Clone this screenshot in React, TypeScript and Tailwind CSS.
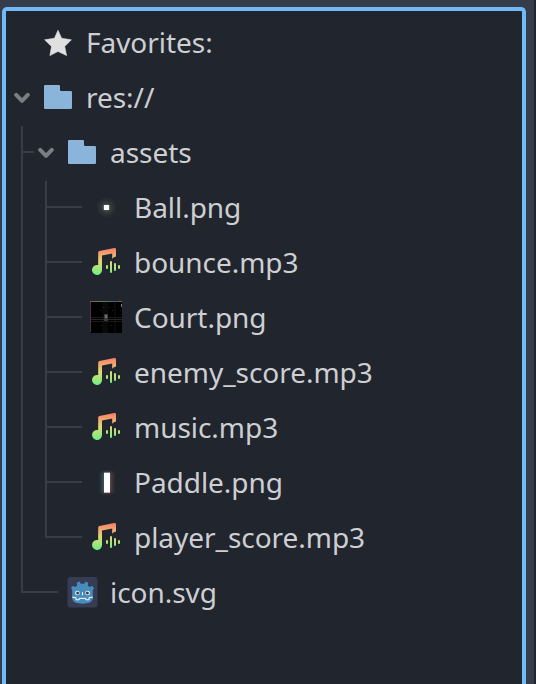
import React from "react";

type Kind = "star" | "folder" | "audio" | "ball" | "court" | "paddle" | "godot";
type Item = { name: string; level: number; kind: Kind; open?: boolean; last?: boolean };

const items: Item[] = [
  { name: "Favorites:", level: 0, kind: "star" },
  { name: "res://", level: 0, kind: "folder", open: true },
  { name: "assets", level: 1, kind: "folder", open: true },
  { name: "Ball.png", level: 2, kind: "ball" },
  { name: "bounce.mp3", level: 2, kind: "audio" },
  { name: "Court.png", level: 2, kind: "court" },
  { name: "enemy_score.mp3", level: 2, kind: "audio" },
  { name: "music.mp3", level: 2, kind: "audio" },
  { name: "Paddle.png", level: 2, kind: "paddle" },
  { name: "player_score.mp3", level: 2, kind: "audio", last: true },
  { name: "icon.svg", level: 1, kind: "godot", last: true },
];

function Icon({ kind }: { kind: Kind }) {
  return (
    <svg viewBox="0 0 32 32" className="h-8 w-8">
      {kind === "star" && (
        <path
          fill="#e0e0e0"
          stroke="#e0e0e0"
          strokeWidth="0.6"
          strokeLinejoin="round"
          d="M16 4.2 19.6 12.3 29.4 13.8 22.7 20.5 24.6 29.6 16 25.4 7.9 29.6 9.5 20.5 2.6 13.8 12.4 12.3Z"
        />
      )}
      {kind === "folder" && (
        <path
          fill="#8ab4da"
          d="M3.2 4h13.6Q18 4 18 5.2V8.8Q18 10 19.2 10h9.6Q30 10 30 11.2v15.6Q30 28 28.8 28H3.2Q2 28 2 26.8V5.2Q2 4 3.2 4Z"
        />
      )}
      {kind === "audio" && (
        <>
          <defs>
            <linearGradient id="tone" x1="0" y1="2" x2="0" y2="29" gradientUnits="userSpaceOnUse">
              <stop offset="0" stopColor="#ff7a6e" />
              <stop offset="0.5" stopColor="#e1da70" />
              <stop offset="1" stopColor="#6df085" />
            </linearGradient>
          </defs>
          <g fill="url(#tone)">
            <path d="M24.3 2.1Q26 1.8 26 3.4V10.6Q23.6 10.8 22.2 12.8V7.4L12 9.4V24a5 5 0 1 1-3.8-4.9V6.6Q8.2 5.4 9.4 5.1Z" />
            <rect x="16" y="19" width="2" height="4" rx="1" />
            <rect x="20" y="15" width="2" height="12" rx="1" />
            <rect x="24" y="17" width="2" height="8" rx="1" />
            <rect x="28" y="19" width="2" height="4" rx="1" />
          </g>
        </>
      )}
      {kind === "ball" && (
        <>
          <defs>
            <radialGradient id="glow">
              <stop offset="0" stopColor="#7e9a80" stopOpacity="0.9" />
              <stop offset="0.4" stopColor="#4f6652" stopOpacity="0.4" />
              <stop offset="1" stopColor="#3b4640" stopOpacity="0" />
            </radialGradient>
          </defs>
          <circle cx="16.5" cy="16.5" r="11" fill="url(#glow)" />
          <path fill="#4e7586" d="M13 14h1v5h-1z" opacity=".7" />
          <path fill="#80604c" d="M19 14h1v5h-1z" opacity=".6" />
          <path fill="#fff" d="M14 14h5v5h-5z" />
        </>
      )}
      {kind === "court" && (
        <>
          <defs>
            <linearGradient id="edge">
              <stop offset="0" stopColor="#8b4d55" />
              <stop offset=".3" stopColor="#6c7d48" />
              <stop offset=".55" stopColor="#51745f" />
              <stop offset=".8" stopColor="#475a8b" />
              <stop offset="1" stopColor="#7d673f" />
            </linearGradient>
          </defs>
          <path fill="#000" d="M0 0h32v32H0z" />
          <path fill="#090909" d="M12 1h6v31h-6zM24 1h2v31h-2z" />
          <path fill="url(#edge)" d="M0 0h32v1H0z" />
          <path fill="#542f43" d="M0 1h1v30H0z" />
          <path fill="#292929" d="M1 18h31v1H1z" />
          <path fill="#1b1b1b" d="M1 16h31v1H1zM1 20h31v1H1z" />
          <path fill="#3c3b39" d="M14 13h4v7h-4z" />
          <path fill="#777069" d="M15 14h2v3h-2z" />
          <path fill="#777" d="M31 3h1v3h-1z" />
          <path
            fill="#252525"
            d="M13 6h1v1h-1zM19 6h1v1h-1zM10 9h1v1h-1zM22 9h1v1h-1zM11 24h1v1h-1zM21 24h1v1h-1z"
          />
        </>
      )}
      {kind === "paddle" && (
        <>
          <defs>
            <linearGradient id="halo">
              <stop offset="0" stopColor="#36505a" stopOpacity="0" />
              <stop offset=".35" stopColor="#527f7b" stopOpacity=".7" />
              <stop offset=".65" stopColor="#8a5f55" stopOpacity=".7" />
              <stop offset="1" stopColor="#55403b" stopOpacity="0" />
            </linearGradient>
            <filter id="soft" x="-50%" y="-20%" width="200%" height="140%">
              <feGaussianBlur stdDeviation="1.5" />
            </filter>
          </defs>
          <rect x="9" y="6" width="16" height="21" fill="url(#halo)" filter="url(#soft)" />
          <path fill="#777a9d" d="M14 6h6v1h-6z" />
          <path fill="#fff" d="M14 7h6v19h-6z" />
          <path fill="#f2a3ac" d="M14 26h6v1h-6z" />
        </>
      )}
      {kind === "godot" && (
        <>
          <rect x="1.5" y="1" width="30" height="30.5" rx="3" fill="#363d52" />
          <path
            fill="#478cbf"
            d="M5 12 7 9.8 9 11 11.2 9.8 10.8 6.8 13.5 5.6 14.8 7.8H18.2L19.5 5.6 22.2 6.8 21.8 9.8 24 11 26 9.8 28 12 26.8 14V22.5Q26 27.7 16.5 27.7T6.2 22.5V14Z"
          />
          <path
            fill="none"
            stroke="#fff"
            strokeWidth="1"
            d="M6.2 21.2 10 21.6V23.8H13.2V22.4H19.8V23.8H23V21.6L26.8 21.2"
          />
          <circle cx="11.4" cy="17" r="2.3" fill="#fff" />
          <circle cx="21.6" cy="17" r="2.3" fill="#fff" />
          <circle cx="11.6" cy="17" r="1.5" fill="#414042" />
          <circle cx="21.4" cy="17" r="1.5" fill="#414042" />
          <path fill="#fff" d="M16 16.3h1v2.9h-1z" />
        </>
      )}
    </svg>
  );
}

function Arrow() {
  return (
    <svg viewBox="0 0 16 12" className="mb-px h-3 w-4 shrink-0">
      <path
        d="M2.2 2.9 8 8.8 13.8 2.9"
        fill="none"
        stroke="#7b7e83"
        strokeWidth="4"
        strokeLinecap="round"
        strokeLinejoin="round"
      />
    </svg>
  );
}

// One level of indentation: the trunk, and the branch when the row hangs on it.
function Guide({ branch, stop, length }: { branch: boolean; stop: boolean; length: string }) {
  return (
    <div className={`flex h-full shrink-0 ${length}`}>
      <div className={`w-0.5 bg-[#393d45] ${stop ? "h-[27px]" : "h-full"}`} />
      {branch && <div className="mt-[25px] h-0.5 flex-1 bg-[#393d45]" />}
    </div>
  );
}

function Row({ item }: { item: Item }) {
  return (
    <div className="flex h-[55px] items-center pl-[15px]">
      {item.level === 1 && (
        <Guide branch stop={!!item.last} length={item.open ? "w-[13px]" : "w-[37px]"} />
      )}
      {item.level === 2 && (
        <>
          <Guide branch={false} stop={false} length="w-6" />
          <Guide branch stop={!!item.last} length="w-[37px]" />
        </>
      )}
      {item.level === 0 && (
        <div className="-ml-[7px] flex w-7 shrink-0 items-center">{item.open && <Arrow />}</div>
      )}
      {item.level === 1 && item.open && (
        <div className="ml-1 flex w-5 shrink-0 items-center">
          <Arrow />
        </div>
      )}
      <div className={`mb-[3px] h-8 w-8 shrink-0 ${item.level === 0 ? "" : "ml-2"}`}>
        <Icon kind={item.kind} />
      </div>
      <span className="mb-0.5 ml-3 whitespace-nowrap text-[28px] leading-[53px] tracking-[-0.04px] text-[#cdcfd2]">
        {item.name}
      </span>
    </div>
  );
}

export default function App() {
  return (
    <div className="flex h-[684px] w-[536px] overflow-hidden bg-[#363d4a] font-['Noto_Sans',sans-serif]">
      <div className="ml-0.5 mt-[7px] w-[524px] rounded-t-[5px] border-4 border-b-0 border-[#70bafa] bg-[#21252e] pt-[5px]">
        {items.map((item) => (
          <Row key={item.name} item={item} />
        ))}
      </div>
      <div className="ml-auto w-0.5 bg-[#21252e]" />
    </div>
  );
}
